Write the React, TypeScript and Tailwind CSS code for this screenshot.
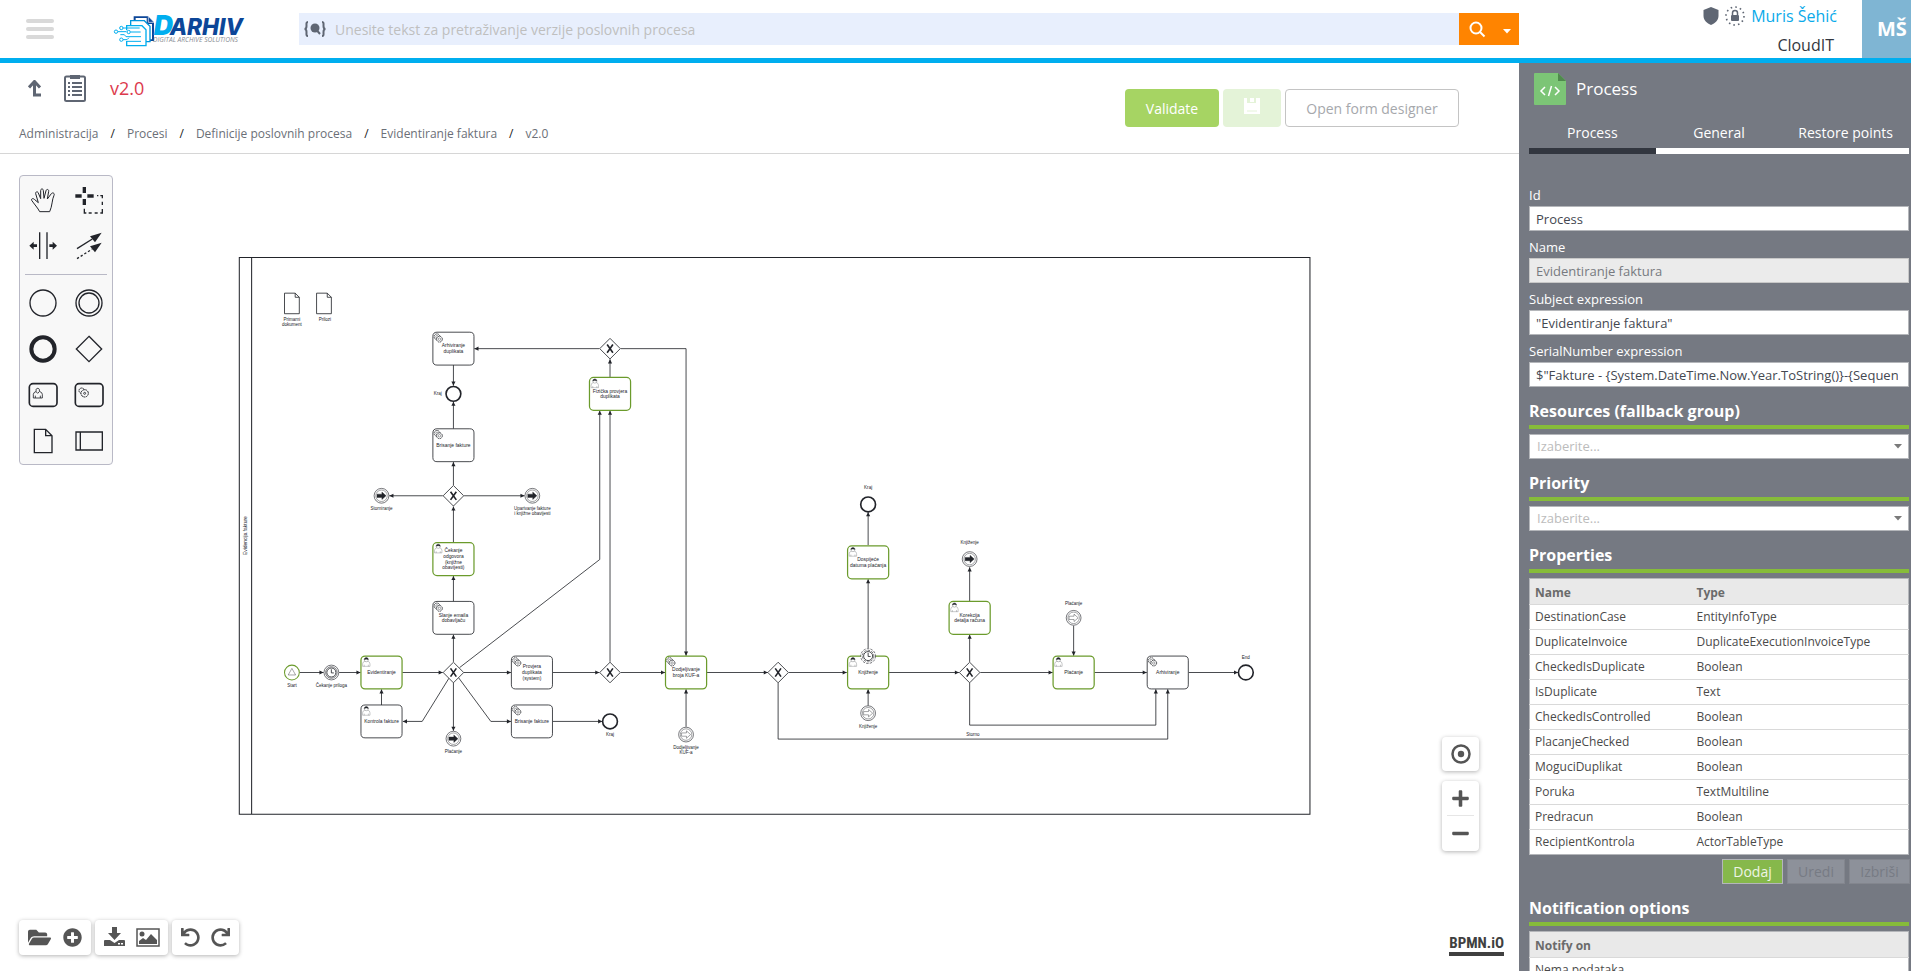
import React from "react";
import { FaFolderOpen, FaPlusCircle, FaUndo, FaRedo, FaPlus, FaMinus } from "react-icons/fa";

const INK = "#22242a";
const GREEN = "#6b9b2c";

/* ---------- Header ---------- */

function Logo() {
  return (
    <svg className="overflow-visible" width="132" height="33" viewBox="24 27 396 99" role="img" aria-label="Darhiv">
      <path d="M86 34h44l17 18v56H94V50h-8z" fill="#0c4698" />
      <path d="M92 39h33v18h16v46H92z" fill="#fff" />
      <path d="M130 34l17 18h-17z" fill="#0c4698" stroke="#fff" strokeWidth="2" />
      <path d="M77 62V47h41l17 17v46h-14" fill="#fff" stroke="#0095dc" strokeWidth="4" />
      <path d="M65 76V62h46l12 12v48H65v-14" fill="#fff" stroke="#00aeef" strokeWidth="4" />
      <g stroke="#00aeef" strokeWidth="3" fill="none">
        <path d="M54 69h50M39 80h25M77 81h30M46 89h12l5 6h45M54 104h12l6-6M66 109h42" />
        <g fill="#fff">
          <circle cx="49" cy="69" r="5" />
          <circle cx="33" cy="80" r="5" />
          <circle cx="71" cy="81" r="5" />
          <circle cx="49" cy="104" r="5" />
        </g>
      </g>
      <text x="146" y="91" fontFamily="Inter, sans-serif" fontWeight="900" fontStyle="italic" fontSize="80" fill="#00aeef">
        D
        <tspan x="194" fontWeight="800" fontSize="68" fill="#0c4698">ARHIV</tspan>
      </text>
      <text x="144" y="112" fontFamily="Open Sans, sans-serif" fontStyle="italic" fontSize="20" fill="#8a8d93">DIGITAL ARCHIVE SOLUTIONS</text>
    </svg>
  );
}

function Header() {
  return (
    <header className="flex h-[63px] shrink-0 border-b-[5px] border-[#00aeef] bg-white">
      <button aria-label="Menu" className="ml-[26px] flex w-7 flex-col justify-center gap-1">
        <span className="h-1 w-full rounded-sm bg-[#d9d9d9]" />
        <span className="h-1 w-full rounded-sm bg-[#d9d9d9]" />
        <span className="h-1 w-full rounded-sm bg-[#d9d9d9]" />
      </button>
      <a href="#" className="ml-[59px] mt-[14px] w-[186px]">
        <Logo />
      </a>
      <div className="mt-[13px] flex h-8 flex-1">
        <label className="flex flex-1 items-center gap-2 bg-[#e8effd] pl-1">
          <svg width="24" height="16" viewBox="0 0 24 16" fill="none" stroke="#5f6673" strokeWidth="2">
            <path d="M5 1C3 1 3.500 3 3.500 5S3 8 1.500 8C3 8 3.500 9 3.500 11S3 15 5 15M19 1c2 0 1.500 2 1.500 4s.5 3 2 3c-1.500 0-2 1-2 3s.5 4-1.500 4" />
            <circle cx="12" cy="7" r="4.500" fill="#5f6673" stroke="none" />
            <path d="M14 9.500l3 3.500" />
          </svg>
          <input
            aria-label="Pretraga"
            placeholder="Unesite tekst za pretraživanje verzije poslovnih procesa"
            className="h-8 flex-1 bg-transparent text-[14px] text-[#444] outline-none placeholder:text-[#bfbfbf]"
          />
        </label>
        <button aria-label="Traži" className="flex w-[60px] items-center bg-[#ff8400] pl-[10px]">
          <svg width="17" height="17" viewBox="0 0 17 17" fill="none" stroke="#fff" strokeWidth="2">
            <circle cx="7" cy="7" r="5.500" />
            <path d="M11 11l4.500 4.500" />
          </svg>
          <svg className="ml-[17px] mt-1" width="8" height="5" viewBox="0 0 8 5">
            <path d="M0 0h8L4 4.500z" fill="#fff" />
          </svg>
        </button>
      </div>
      <div className="flex w-[392px]">
        <div className="flex flex-1 flex-col items-end pr-[25px]">
          <div className="flex h-8 items-center gap-[6px]">
            <svg width="16" height="18" viewBox="0 0 16 18">
              <path d="M8 0l7.500 3v6c0 4-3.500 7.500-7.500 9C4 16.500.5 13 .5 9V3z" fill="#5f6673" />
            </svg>
            <svg width="20" height="20" viewBox="0 0 20 20">
              <circle cx="10" cy="10" r="9" fill="none" stroke="#5f6673" strokeWidth="1.600" strokeDasharray="1.600 3.112" />
              <rect x="6" y="9" width="8" height="6" rx="1" fill="#5f6673" />
              <path d="M7.500 9V7a2.500 2.500 0 015 0v2" fill="none" stroke="#5f6673" strokeWidth="1.500" />
            </svg>
            <a href="#" className="text-[16px] text-[#0aaaea]">Muris Šehić</a>
          </div>
          <span className="pr-[3px] text-[16px] leading-[26px] text-[#333740]">CloudIT</span>
        </div>
        <div className="flex w-[49px] items-center overflow-hidden bg-[#7fb5d3] pl-[15px] text-xl font-bold text-white">MŠ</div>
      </div>
    </header>
  );
}

/* ---------- Title bar ---------- */

const crumbs = ["Administracija", "Procesi", "Definicije poslovnih procesa", "Evidentiranje faktura", "v2.0"];

function TitleBar() {
  return (
    <div className="flex h-[91px] shrink-0 items-start justify-between border-b border-[#d6d6d6] pl-[19px] pr-[60px]">
      <div>
        <div className="flex h-[50px] items-center pl-[9px]">
          <a href="#" aria-label="Nazad">
            <svg width="14" height="17" viewBox="0 0 14 17" fill="none" stroke="#5f6673" strokeWidth="3">
              <path d="M1 7.500l5.500-6 5.500 6M6.500 2v13H13" />
            </svg>
          </a>
          <svg className="ml-[22px]" width="22" height="28" viewBox="0 0 22 28" fill="none" stroke="#5f6673" strokeWidth="2">
            <rect x="1" y="2.500" width="20" height="24.500" rx="1.500" />
            <path d="M6 1h10v4H6z" fill="#5f6673" stroke="none" />
            <path d="M8 9h10M8 13h10M8 17h10M8 21h10" strokeWidth="1.800" />
            <path d="M4 9h2M4 13h2M4 17h2M4 21h2" strokeWidth="1.800" />
          </svg>
          <h1 className="ml-6 text-lg text-[#dc3a4d]">v2.0</h1>
        </div>
        <nav aria-label="Putanja" className="flex items-center gap-3 text-[12px] leading-[42px] text-[#6b6f77]">
          {crumbs.map((c, i) => (
            <React.Fragment key={c}>
              {i > 0 && <span className="text-[#222]">/</span>}
              <a href="#">{c}</a>
            </React.Fragment>
          ))}
        </nav>
      </div>
      <div className="mt-[26px] flex h-[38px] gap-1 text-[14px]">
        <button className="w-[94px] rounded-sm bg-[#a6d463] text-white">Validate</button>
        <button aria-label="Save" disabled className="flex w-[58px] justify-center rounded-sm bg-[#e4f3d8] pt-[9px]">
          <svg width="16" height="16" viewBox="0 0 16 16">
            <path d="M0 0h3v5h9V0h4v16H0z M6 0h4v4H6z" fill="#fff" />
            <path d="M3 13h10" stroke="#e4f3d8" />
          </svg>
        </button>
        <button className="w-[174px] rounded-sm border border-[#c4c4c4] text-[#a6a8ac]">Open form designer</button>
      </div>
    </div>
  );
}

/* ---------- Palette ---------- */

const tools: { name: string; art: React.ReactNode }[] = [
  {
    name: "Hand tool",
    art: <path strokeWidth="3" d="M-10 35C-14 26-28 10-34 1C-36-4-30-6-26-2L-14 8L-22-19C-23-25-16-27-14-21L-7-4L-7-28C-7-35 1-35 1-28L3-5L9-28C11-34 18-32 17-26L13-3L25-19C29-24 36-20 33-14C27-2 28 18 20 35Z" />,
  },
  {
    name: "Lasso tool",
    art: (
      <>
        <path strokeWidth="10" d="M-14-39v18M-14-3v18M-41-12h19M-5-12h19" />
        <path strokeWidth="4" d="M24-13h4M34-13h6v8M40 5v10M40 27v12h-6M26 39h-9M8 39h-9M-8 39h-6v-13" />
      </>
    ),
  },
  {
    name: "Space tool",
    art: (
      <>
        <path strokeWidth="4" d="M-10-41v80M12-41v80" />
        <path stroke="none" fill={INK} d="M-41-1l13-12v8h10v8h-10v8zM42-1L29-13v8H19v8h10v8z" />
      </>
    ),
  },
  {
    name: "Connect tool",
    art: (
      <>
        <path strokeWidth="4" d="M-36 8L10-21" />
        <path strokeWidth="4" strokeDasharray="7 6" d="M-36 38L10 9" />
        <path stroke="none" fill={INK} d="M38-40L18-11 3-29zM38-10L18 19 3 1z" />
      </>
    ),
  },
  { name: "Start event", art: <circle r="39" strokeWidth="4" /> },
  {
    name: "Intermediate event",
    art: (
      <>
        <circle r="39" strokeWidth="4" />
        <circle r="30" strokeWidth="4" />
      </>
    ),
  },
  { name: "End event", art: <circle r="35" strokeWidth="12" /> },
  { name: "Gateway", art: <path strokeWidth="4" d="M0-38L38 0 0 38-38 0z" /> },
  {
    name: "User task",
    art: (
      <>
        <rect x="-41" y="-34" width="83" height="68" rx="11" strokeWidth="5" />
        <path strokeWidth="2.500" d="M-29 9V-2q0-6 9-9c-5-12 13-12 9 0q9 3 9 9V9zM-23 9V2M-8 9V2M-21-10l5 5 5-5" />
      </>
    ),
  },
  {
    name: "Service task",
    art: (
      <>
        <rect x="-41" y="-34" width="83" height="68" rx="11" strokeWidth="5" />
        <g strokeWidth="3">
          <circle r="8" cx="-22" cy="-13" strokeDasharray="5 1.500" />
          <circle r="11" cx="-13" cy="-5" fill="#f8f8f8" strokeDasharray="6 1.500" />
          <circle r="3" cx="-13" cy="-5" strokeWidth="2.500" />
        </g>
      </>
    ),
  },
  {
    name: "Data object",
    art: <path strokeWidth="4" d="M-26-35H8L27-16V35H-26zM8-35v19h19" />,
  },
  {
    name: "Pool",
    art: <path strokeWidth="4" d="M-39-27h79v54h-79zM-26-27v54" />,
  },
];

function ToolButton({ name, art }: { name: string; art: React.ReactNode }) {
  return (
    <button aria-label={name} title={name}>
      <svg width="46" height="46" viewBox="-69 -69 138 138" fill="none" stroke={INK}>
        {art}
      </svg>
    </button>
  );
}

function Palette() {
  return (
    <div className="absolute left-[19px] top-[21px] w-[94px] rounded-sm border border-[#b9b9c6] bg-[#f8f8f8] pt-px">
      <div className="grid grid-cols-2">
        {tools.slice(0, 4).map((t) => <ToolButton key={t.name} {...t} />)}
      </div>
      <hr className="mx-[5px] my-[5px] border-[#b9b9c6]" />
      <div className="grid grid-cols-2">
        {tools.slice(4).map((t) => <ToolButton key={t.name} {...t} />)}
      </div>
    </div>
  );
}

/* ---------- Diagram ---------- */

type Kind = "user" | "service";

function Lines({ x, y, lines, size, step }: { x: number; y: number; lines: string[]; size: number; step: number }) {
  return (
    <g fontSize={size} textAnchor="middle" fill={INK} stroke="none">
      {lines.map((l, i) => (
        <text key={i} x={x} y={y + i * step}>{l}</text>
      ))}
    </g>
  );
}

function Task({ x, y, kind, green, lines }: { x: number; y: number; kind: Kind; green?: boolean; lines: string[] }) {
  return (
    <g>
      <rect x={x - 50} y={y - 40} width="100" height="80" rx="10" fill="#fff" stroke={green ? GREEN : INK} strokeWidth={green ? 3 : 2} />
      <g transform={`translate(${x - 37} ${y - 26})`} fill="#fff">
        {kind === "user" ? (
          <g strokeWidth="0.600">
            <path d="M-9 11V5q0-5 6-7h6q6 2 6 7v6zM-5 11V7M5 11V7" />
            <circle cy="-5" r="5" />
            <path d="M-5-5c0-7 10-7 10 0q-5-3-10 0z" fill={INK} />
          </g>
        ) : (
          <g strokeWidth="1">
            <circle cx="-3" cy="-3" r="7" strokeWidth="2" strokeDasharray="4 1.500" />
            <circle cx="-3" cy="-3" r="3" />
            <circle cx="3" cy="3" r="7" strokeWidth="2" strokeDasharray="4 1.500" />
            <circle cx="3" cy="3" r="3" />
          </g>
        )}
      </g>
      <Lines x={x} y={y + 4 - (lines.length - 1) * 7} lines={lines} size={12} step={14} />
    </g>
  );
}

function Gateway({ x, y }: { x: number; y: number }) {
  return (
    <g transform={`translate(${x} ${y})`}>
      <path d="M0-25L25 0 0 25-25 0z" fill="#fff" strokeWidth="2" />
      <path d="M-7-10L7 10M7-10L-7 10" strokeWidth="4" />
    </g>
  );
}

function EndEvent({ x, y }: { x: number; y: number }) {
  return <circle cx={x} cy={y} r="18" fill="#fff" strokeWidth="4" />;
}

function LinkEvent({ x, y, filled }: { x: number; y: number; filled?: boolean }) {
  return (
    <g transform={`translate(${x} ${y})`} fill="#fff" strokeWidth="1">
      <circle r="18" strokeWidth="1.500" />
      <circle r="14" />
      <path d="M-11-4H1v-5l10 9-10 9V4h-12z" fill={filled ? INK : "#fff"} />
    </g>
  );
}

function TimerEvent({ x, y, dashed }: { x: number; y: number; dashed?: boolean }) {
  return (
    <g transform={`translate(${x} ${y})`} fill="#fff">
      <circle r="18" strokeWidth="1.500" strokeDasharray={dashed ? "6 3" : undefined} />
      <circle r="14" strokeWidth="1.500" strokeDasharray={dashed ? "6 3" : undefined} />
      <circle r="11" strokeWidth="2" />
      <path d="M0-8V1h6" strokeWidth="2" />
    </g>
  );
}

function DataObject({ x, y }: { x: number; y: number }) {
  return <path transform={`translate(${x} ${y})`} d="M-18-25h26l10 10v40h-36zM8-25v10h10" fill="#fff" strokeWidth="2" />;
}

const flows = [
  "M146 1010H205", "M243 1010H295", "M397 1010H495", "M346 1089V1051", "M546 1010H661", "M763 1010H876",
  "M928 1010H1036", "M1138 1010H1286", "M1337 1010H1478", "M1580 1010H1751", "M1803 1010H1979", "M2081 1010H2208",
  "M2310 1010H2430", "M521 984V918", "M521 837V775", "M521 694V606", "M521 554V498", "M521 417V351", "M521 262V312",
  "M495 580H365", "M547 580H694", "M876 222H572", "M928 222H1087V969", "M902 291V248", "M902 984V373",
  "M536 998L877 735V373", "M510 1024L445 1129H398", "M521 1035V1152", "M533 1022L612 1129H661", "M763 1129H883",
  "M1087 1142V1051", "M1311 1035V1172H2259V1051", "M1777 1035V1138H2230V1051", "M1530 1091V1051",
  "M1530 951V783", "M1530 700V620", "M1777 984V918", "M1777 837V754", "M2030 896V969",
];

function Diagram() {
  return (
    <svg className="absolute inset-0 h-full w-full" role="img" aria-label="Evidencija fakture">
      <defs>
        <marker id="arrow" viewBox="0 0 20 20" refX="11" refY="10" markerWidth="10" markerHeight="10" orient="auto">
          <path d="M1 5L11 10 1 15z" fill={INK} />
        </marker>
      </defs>
      <g transform="translate(239.300 103.400) scale(.411)" fontFamily="Liberation Sans, Arial, sans-serif" stroke={INK} fill="none">
        <path d="M0 0H2605V1355H0zM30 0V1355" strokeWidth="2.500" />
        <g transform="translate(18 677) rotate(-90)">
          <Lines x={0} y={0} lines={["Evidencija fakture"]} size={12} step={14} />
        </g>
        <DataObject x={128} y={112} />
        <DataObject x={206} y={112} />
        <g strokeWidth="2">
          {flows.map((d) => <path key={d} d={d} markerEnd="url(#arrow)" />)}
        </g>

        <Task x={521} y={222} kind="service" lines={["Arhiviranje", "duplikata"]} />
        <Task x={902} y={332} kind="user" green lines={["Fizička provjera", "duplikata"]} />
        <Task x={521} y={457} kind="service" lines={["Brisanje fakture"]} />
        <Task x={521} y={734} kind="user" green lines={["Čekanje", "odgovora", "(knjižne", "obavijesti)"]} />
        <Task x={521} y={877} kind="service" lines={["Slanje emaila", "dobavljaču"]} />
        <Task x={346} y={1010} kind="user" green lines={["Evidentiranje"]} />
        <Task x={346} y={1129} kind="user" lines={["Kontrola fakture"]} />
        <Task x={712} y={1010} kind="service" lines={["Provjera", "duplikata", "(system)"]} />
        <Task x={712} y={1129} kind="service" lines={["Brisanje fakture"]} />
        <Task x={1087} y={1010} kind="service" green lines={["Dodjeljivanje", "broja KUF-a"]} />
        <Task x={1530} y={1010} kind="user" green lines={["Knjiženje"]} />
        <Task x={1530} y={742} kind="user" green lines={["Dospijeće", "datuma plaćanja"]} />
        <Task x={1777} y={877} kind="user" green lines={["Korekcija", "detalja računa"]} />
        <Task x={2030} y={1010} kind="user" green lines={["Plaćanje"]} />
        <Task x={2259} y={1010} kind="service" lines={["Arhiviranje"]} />

        <Gateway x={902} y={222} />
        <Gateway x={521} y={580} />
        <Gateway x={521} y={1010} />
        <Gateway x={902} y={1010} />
        <Gateway x={1311} y={1010} />
        <Gateway x={1777} y={1010} />

        <circle cx="128" cy="1010" r="18" fill="#fff" stroke={GREEN} strokeWidth="2.500" />
        <path d="M128 1000l9 16h-18z" strokeWidth="1" />
        <TimerEvent x={224} y={1010} />
        <TimerEvent x={1530} y={970} dashed />
        <EndEvent x={521} y={332} />
        <EndEvent x={902} y={1129} />
        <EndEvent x={1530} y={601} />
        <EndEvent x={2449} y={1010} />
        <LinkEvent x={346} y={580} filled />
        <LinkEvent x={713} y={580} filled />
        <LinkEvent x={521} y={1171} filled />
        <LinkEvent x={1777} y={734} filled />
        <LinkEvent x={1087} y={1161} />
        <LinkEvent x={1530} y={1109} />
        <LinkEvent x={2030} y={877} />

        <Lines x={128} y={155} lines={["Primarni", "dokument"]} size={11} step={13} />
        <Lines x={208} y={155} lines={["Prilozi"]} size={11} step={13} />
        <Lines x={483} y={335} lines={["Kraj"]} size={11} step={13} />
        <Lines x={346} y={615} lines={["Storniranje"]} size={11} step={13} />
        <Lines x={713} y={615} lines={["Uparivanje fakture", "i knjižne obavijesti"]} size={11} step={13} />
        <Lines x={128} y={1045} lines={["Start"]} size={11} step={13} />
        <Lines x={224} y={1045} lines={["Čekanje priloga"]} size={11} step={13} />
        <Lines x={521} y={1206} lines={["Plaćanje"]} size={11} step={13} />
        <Lines x={902} y={1165} lines={["Kraj"]} size={11} step={13} />
        <Lines x={1087} y={1196} lines={["Dodjeljivanje", "KUF-a"]} size={11} step={13} />
        <Lines x={1530} y={1145} lines={["Knjiženje"]} size={11} step={13} />
        <Lines x={1530} y={564} lines={["Kraj"]} size={11} step={13} />
        <Lines x={1777} y={697} lines={["Knjiženje"]} size={11} step={13} />
        <Lines x={1785} y={1165} lines={["Storno"]} size={11} step={13} />
        <Lines x={2030} y={846} lines={["Plaćanje"]} size={11} step={13} />
        <Lines x={2449} y={978} lines={["End"]} size={11} step={13} />
      </g>
    </svg>
  );
}

const panel = "flex items-center rounded-sm bg-white text-[#555] shadow-[0_1px_4px_rgba(0,0,0,0.3)]";

function Canvas() {
  return (
    <div className="relative min-h-0 flex-1 overflow-hidden bg-white">
      <Diagram />
      <Palette />
      <div className="absolute bottom-4 left-[19px] flex h-[35px] gap-1">
        <div className={`${panel} w-[72px] justify-between pl-[9px] pr-[9px]`}>
          <button aria-label="Open"><FaFolderOpen size={23} /></button>
          <button aria-label="New"><FaPlusCircle size={19} /></button>
        </div>
        <div className={`${panel} w-[73px] justify-between pl-[9px] pr-2`}>
          <button aria-label="Download">
            <svg className="-mt-[2px]" width="21" height="20" viewBox="0 0 21 20" fill="currentColor">
              <path d="M8 0h5v6h4l-6.500 7L4 6h4z" />
              <path d="M0 14q0-1 1-1h5l4.500 3 4.500-3h5q1 0 1 1v5H0zM14 16h2v1.500h-2zM17 16h2v1.500h-2z" fillRule="evenodd" />
            </svg>
          </button>
          <button aria-label="Export image">
            <svg width="24" height="19" viewBox="0 0 24 19" fill="currentColor">
              <rect x="1" y="1" width="22" height="17" fill="none" stroke="currentColor" strokeWidth="1.500" />
              <circle cx="6" cy="6" r="2.500" />
              <path d="M3 16v-3l4-3 3 2 5-6 6 6v4z" />
            </svg>
          </button>
        </div>
        <div className={`${panel} w-[67px] justify-between px-[9px]`}>
          <button aria-label="Undo"><FaUndo size={19} /></button>
          <button aria-label="Redo"><FaRedo size={19} /></button>
        </div>
      </div>
      <div className="absolute bottom-[120px] right-10 flex w-[37px] flex-col gap-[10px]">
        <button aria-label="Reset zoom" className={`${panel} h-[34px] justify-center`}>
          <svg width="20" height="20" viewBox="0 0 20 20">
            <circle cx="10" cy="10" r="8.500" fill="none" stroke="#555" strokeWidth="2.500" />
            <circle cx="10" cy="10" r="3.200" fill="#555" />
          </svg>
        </button>
        <div className={`${panel} h-[70px] flex-col`}>
          <button aria-label="Zoom in" className="flex h-[34px] items-center"><FaPlus size={19} /></button>
          <hr className="w-[27px] border-[#e6e6e6]" />
          <button aria-label="Zoom out" className="flex h-[35px] items-center"><FaMinus size={19} /></button>
        </div>
      </div>
      <a href="#" className="absolute bottom-[15px] right-[15px] border-b-4 border-[#404040] font-['Liberation_Sans_Narrow','Roboto_Condensed','Open_Sans',sans-serif] text-[15px] font-bold leading-[17px] text-[#404040]">
        BPMN.iO
      </a>
    </div>
  );
}

/* ---------- Properties sidebar ---------- */

function Field({ id, label, value, disabled }: { id: string; label: string; value: string; disabled?: boolean }) {
  return (
    <div className="mb-[6px]">
      <label htmlFor={id} className="block text-[13px] leading-[21px] text-white">{label}</label>
      <input
        id={id}
        defaultValue={value}
        disabled={disabled}
        className="block h-[25px] w-full border border-[#b4b6ba] bg-white pl-[6px] pr-[10px] text-[13px] text-[#444851] disabled:border-[#c8c8c8] disabled:bg-[#ebebeb] disabled:text-[#777a80]"
      />
    </div>
  );
}

function Heading({ children }: { children: React.ReactNode }) {
  return <h2 className="mb-[5px] mt-[11px] border-b-4 border-[#86bc3a] text-[16px] font-bold leading-[27px] text-white">{children}</h2>;
}

function Picker({ label }: { label: string }) {
  return (
    <div className="relative">
      <select aria-label={label} defaultValue="" className="block h-[25px] w-full appearance-none border border-[#b4b6ba] bg-white px-[7px] text-[13px] text-[#bcbcbc]">
        <option value="">Izaberite...</option>
      </select>
      <svg className="pointer-events-none absolute right-[7px] top-[10px]" width="8" height="5" viewBox="0 0 8 5">
        <path d="M0 0h8L4 4.500z" fill="#7a7a7a" />
      </svg>
    </div>
  );
}

const properties = [
  ["DestinationCase", "EntityInfoType"],
  ["DuplicateInvoice", "DuplicateExecutionInvoiceType"],
  ["CheckedIsDuplicate", "Boolean"],
  ["IsDuplicate", "Text"],
  ["CheckedIsControlled", "Boolean"],
  ["PlacanjeChecked", "Boolean"],
  ["MoguciDuplikat", "Boolean"],
  ["Poruka", "TextMultiline"],
  ["Predracun", "Boolean"],
  ["RecipientKontrola", "ActorTableType"],
];

const tableClass = "w-full table-fixed border-collapse border border-[#b4b6ba] bg-white text-left text-[12px] text-[#4a4a4a]";

function Sidebar() {
  return (
    <aside className="w-[392px] shrink-0 overflow-hidden bg-[#757982] pl-[10px] pr-[2px]">
      <div className="flex h-[53px] items-center pb-px pl-[5px]">
        <svg width="32" height="32" viewBox="0 0 32 32">
          <path d="M1 0h23l8 8v23q0 1-1 1H1q-1 0-1-1V1q0-1 1-1z" fill="#7cc576" />
          <path d="M24 0l8 8h-8z" fill="#4f8a4c" />
          <path d="M11 14l-4 4 4 4M21 14l4 4-4 4M17.500 13l-3 10" fill="none" stroke="#fff" strokeWidth="1.500" />
        </svg>
        <h2 className="ml-[10px] text-[17px] text-white">Process</h2>
      </div>
      <div role="tablist" className="grid h-[38px] grid-cols-3 text-[14px] text-white">
        <button role="tab" aria-selected="true" className="border-b-[6px] border-[#32363f]">Process</button>
        <button role="tab" aria-selected="false" className="border-b-[6px] border-white">General</button>
        <button role="tab" aria-selected="false" className="border-b-[6px] border-white">Restore points</button>
      </div>
      <div className="pt-[31px]">
        <Field id="f-id" label="Id" value="Process" />
        <Field id="f-name" label="Name" value="Evidentiranje faktura" disabled />
        <Field id="f-subject" label="Subject expression" value={'"Evidentiranje faktura"'} />
        <Field id="f-serial" label="SerialNumber expression" value={'$"Fakture - {System.DateTime.Now.Year.ToString()}-{Sequence.Next()}"'} />
      </div>
      <Heading>Resources (fallback group)</Heading>
      <Picker label="Resources" />
      <Heading>Priority</Heading>
      <Picker label="Priority" />
      <Heading>Properties</Heading>
      <table className={tableClass}>
        <thead>
          <tr className="h-[26px] bg-[#e9e9e9] text-[#6b6b6b]">
            <th className="w-[162px] pl-[5px] pt-[2px]">Name</th>
            <th className="pl-[5px] pt-[2px]">Type</th>
          </tr>
        </thead>
        <tbody>
          {properties.map(([name, type]) => (
            <tr key={name} className="h-[25px] border-t border-[#d9d9d9]">
              <td className="pl-[5px]">{name}</td>
              <td className="pl-[5px]">{type}</td>
            </tr>
          ))}
        </tbody>
      </table>
      <div className="-mr-px mt-1 flex h-[25px] justify-end gap-1 text-[14px]">
        <button className="w-[61px] border border-[#b4b6ba] bg-[#86b84b] text-[#eef5e6]">Dodaj</button>
        <button disabled className="w-[58px] border border-[#83868e] bg-[#8d919a] text-[#777b84]">Uredi</button>
        <button disabled className="w-[61px] border border-[#83868e] bg-[#8d919a] text-[#777b84]">Izbriši</button>
      </div>
      <Heading>Notification options</Heading>
      <table className={tableClass}>
        <thead>
          <tr className="h-[26px] bg-[#e9e9e9] text-[#6b6b6b]">
            <th className="pl-[5px] pt-[2px]">Notify on</th>
          </tr>
        </thead>
        <tbody>
          <tr className="h-[25px] border-t border-[#d9d9d9]">
            <td className="pl-[5px]">Nema podataka</td>
          </tr>
        </tbody>
      </table>
    </aside>
  );
}

export default function App() {
  return (
    <div className="flex h-screen flex-col overflow-hidden bg-white font-['Open_Sans','Noto_Sans',sans-serif]">
      <Header />
      <div className="flex min-h-0 flex-1">
        <main className="flex min-w-0 flex-1 flex-col">
          <TitleBar />
          <Canvas />
        </main>
        <Sidebar />
      </div>
    </div>
  );
}
